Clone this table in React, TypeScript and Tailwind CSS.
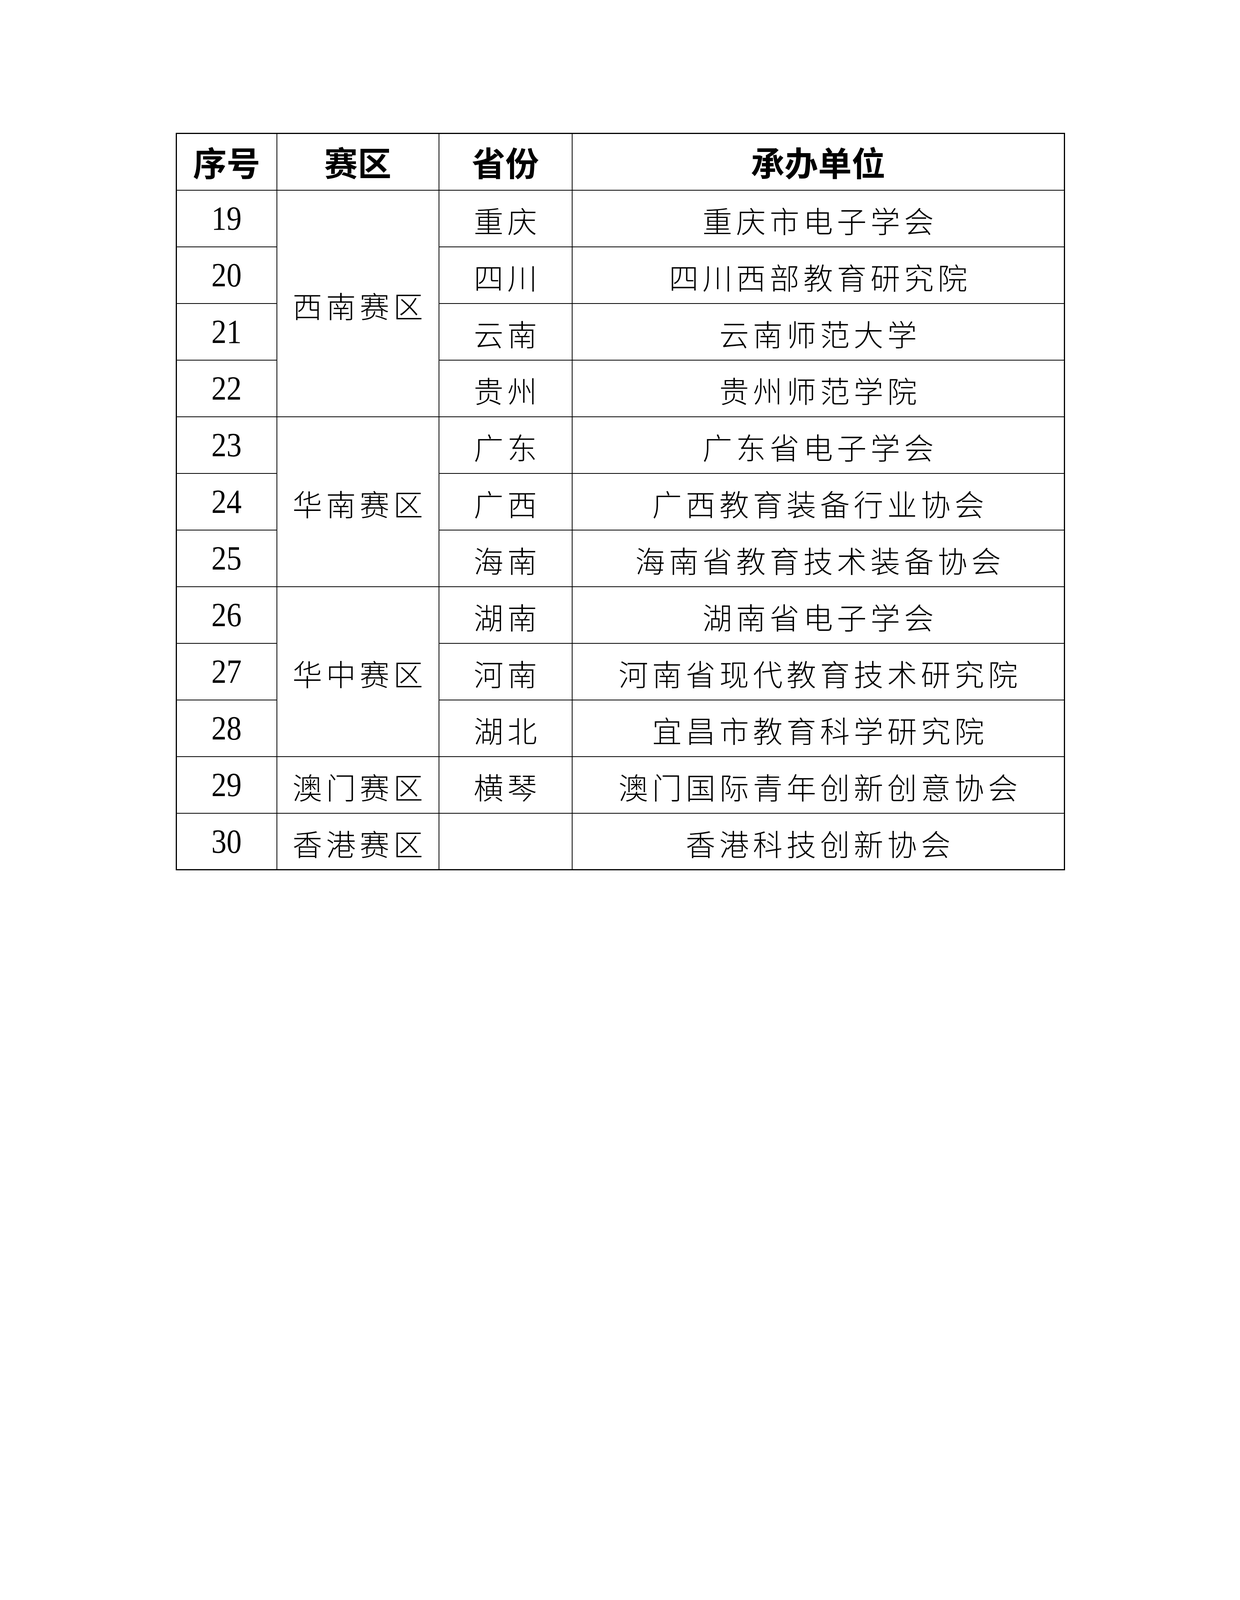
// 赛区承办单位一览表（续）— plain bordered table with merged 赛区 cells.

type Row = {
  no: number;
  region?: { name: string; span: number };
  province: string;
  host: string;
};

const ROWS: Row[] = [
  { no: 19, region: { name: "西南赛区", span: 4 }, province: "重庆", host: "重庆市电子学会" },
  { no: 20, province: "四川", host: "四川西部教育研究院" },
  { no: 21, province: "云南", host: "云南师范大学" },
  { no: 22, province: "贵州", host: "贵州师范学院" },
  { no: 23, region: { name: "华南赛区", span: 3 }, province: "广东", host: "广东省电子学会" },
  { no: 24, province: "广西", host: "广西教育装备行业协会" },
  { no: 25, province: "海南", host: "海南省教育技术装备协会" },
  { no: 26, region: { name: "华中赛区", span: 3 }, province: "湖南", host: "湖南省电子学会" },
  { no: 27, province: "河南", host: "河南省现代教育技术研究院" },
  { no: 28, province: "湖北", host: "宜昌市教育科学研究院" },
  { no: 29, region: { name: "澳门赛区", span: 1 }, province: "横琴", host: "澳门国际青年创新创意协会" },
  { no: 30, region: { name: "香港赛区", span: 1 }, province: "", host: "香港科技创新协会" },
];

const cjk = "font-['Noto_Sans_CJK_SC',sans-serif]";
const cell = "border-2 border-black text-center align-middle p-0";
const body = `${cjk} text-[76px] leading-none tracking-[10px] pl-[10px] pt-[8px] font-light`;

export default function App() {
  return (
    <div className="min-h-screen w-full bg-white pt-[340px] pl-[450px] text-black">
      <table className="border-collapse border-[3px] border-black table-fixed w-[2274px]">
        <colgroup>
          <col className="w-[257px]" />
          <col className="w-[415px]" />
          <col className="w-[341px]" />
          <col className="w-[1261px]" />
        </colgroup>
        <thead>
          <tr className="h-[145px]">
            {["序号", "赛区", "省份", "承办单位"].map((h) => (
              <th key={h} className={`${cell} ${cjk} text-[86px] leading-none font-bold`}>
                {h}
              </th>
            ))}
          </tr>
        </thead>
        <tbody>
          {ROWS.map((r) => (
            <tr key={r.no} className="h-[145px]">
              <td className={cell}>
                <span className="inline-block font-['Liberation_Serif',serif] text-[86px] leading-none scale-x-90">
                  {r.no}
                </span>
              </td>
              {r.region && (
                <td rowSpan={r.region.span} className={`${cell} ${body}`}>
                  {r.region.name}
                </td>
              )}
              <td className={`${cell} ${body}`}>{r.province}</td>
              <td className={`${cell} ${body}`}>{r.host}</td>
            </tr>
          ))}
        </tbody>
      </table>
    </div>
  );
}
